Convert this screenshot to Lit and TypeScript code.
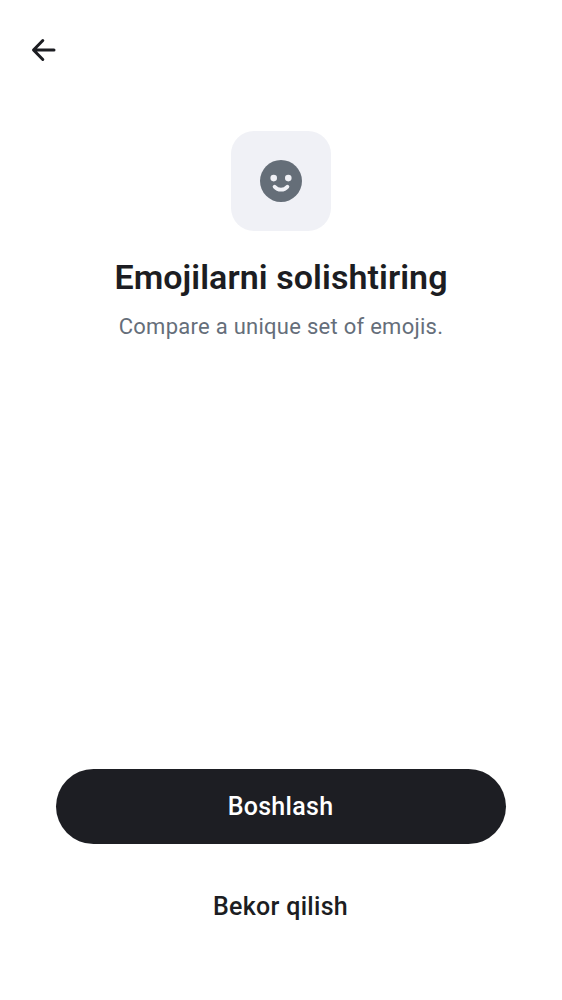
import { LitElement, html, css } from "lit";
import { customElement } from "lit/decorators.js";

@customElement("app-root")
export class AppRoot extends LitElement {
  static styles = css`
    :host {
      display: flex;
      flex-direction: column;
      box-sizing: border-box;
      height: 1000px;
      padding: 32px 56px 56px;
      background: #ffffff;
      color: #1c1d22;
      font-family: Roboto, "Liberation Sans", sans-serif;
    }
    svg { display: block; }
    button { border: 0; padding: 0; margin: 0; background: none; color: inherit; font: inherit; }
    .back { width: 36px; height: 36px; margin-left: -30px; }
    .hero { display: flex; flex-direction: column; align-items: center; margin-top: 63px; }
    .tile { display: grid; place-items: center; width: 100px; height: 100px; border-radius: 23px; background: #f0f1f6; }
    h1 { margin: 26px 0 0; font-size: 34px; line-height: 40px; font-weight: 600; letter-spacing: 0.07px; white-space: nowrap; }
    p { margin: 15px 0 0; font-size: 22px; line-height: 30px; letter-spacing: 0.27px; color: #656e7a; white-space: nowrap; }
    .actions { display: flex; flex-direction: column; gap: 25px; margin-top: auto; }
    .action { height: 75px; padding-right: 1px; border-radius: 38px; font-size: 25px; font-weight: 500; letter-spacing: 0.3px; }
    .primary { background: #1d1e23; color: #ffffff; }
  `;

  render() {
    return html`
      <button class="back" aria-label="Back">
        <svg width="36" height="36" viewBox="0 0 36 36" fill="none" stroke="#1c1d22" stroke-width="3" stroke-linecap="round" stroke-linejoin="round">
          <path d="M28 18H8M16.8 8.5L7.5 18L16.8 27.5" />
        </svg>
      </button>
      <section class="hero">
        <div class="tile">
          <svg width="42" height="42" viewBox="0 0 42 42">
            <circle cx="21" cy="21" r="21" fill="#656e78" />
            <circle cx="13.7" cy="18.1" r="3.3" fill="#f0f1f6" />
            <circle cx="28.3" cy="18.1" r="3.3" fill="#f0f1f6" />
            <path d="M14.6 26.7C18 30.7 24 30.7 27.4 26.7" fill="none" stroke="#f0f1f6" stroke-width="3.8" stroke-linecap="round" />
          </svg>
        </div>
        <h1>Emojilarni solishtiring</h1>
        <p>Compare a unique set of emojis.</p>
      </section>
      <div class="actions">
        <button class="action primary">Boshlash</button>
        <button class="action">Bekor qilish</button>
      </div>
    `;
  }
}
